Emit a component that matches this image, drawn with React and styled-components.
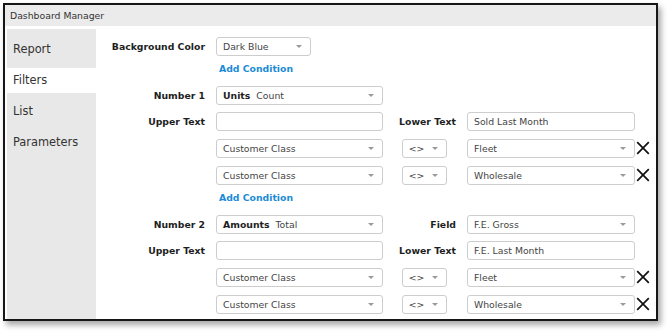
import React from 'react';
import styled, { createGlobalStyle } from 'styled-components';

const GlobalStyle = createGlobalStyle`
  html, body {
    margin: 0;
    padding: 0;
    background: #fff;
  }
  body {
    font-family: 'DejaVu Sans', Verdana, sans-serif;
  }
`;

const Page = styled.div`
  width: 670px;
  height: 335px;
  padding: 3px 0 0 3px;
  box-sizing: border-box;
`;

const Window = styled.div`
  width: 655px;
  height: 318px;
  box-sizing: border-box;
  border: 2px solid #161616;
  background: #fff;
  box-shadow: 3px 4px 6px rgba(0, 0, 0, 0.35);
  display: flex;
  flex-direction: column;
  overflow: hidden;
`;

const TitleBar = styled.div`
  height: 21px;
  line-height: 21px;
  padding-left: 5px;
  background: #ebebeb;
  color: #333;
  font-size: 9.3px;
`;

const Body = styled.div`
  flex: 1;
  display: flex;
  padding: 3px 0 0 2px;
  min-height: 0;
`;

const Sidebar = styled.div`
  width: 89px;
  background: #e8e8e8;
  padding-top: 8px;
  display: flex;
  flex-direction: column;
  gap: 6px;
`;

const NavItem = styled.div`
  height: 25px;
  line-height: 25px;
  padding-left: 6px;
  font-size: 11.4px;
  color: #333;
  background: ${props => props.$active ? '#fff' : 'transparent'};
`;

const Content = styled.div`
  flex: 1;
  padding-top: 7.7px;
  display: flex;
  flex-direction: column;
  gap: 7.67px;
`;

const Row = styled.div`
  display: grid;
  grid-template-columns: 120px 167px 84px 168px 16px;
  align-items: center;
  font-size: 9.3px;
`;

const Label = styled.div`
  grid-column: ${props => props.$col || 1};
  text-align: right;
  padding-right: 11px;
  font-weight: bold;
  color: #1e1e1e;
  white-space: nowrap;
`;

const Select = styled.div`
  grid-column: ${props => props.$col || 'auto'};
  width: ${props => props.$width ? props.$width + 'px' : 'auto'};
  margin-left: ${props => props.$offset || 0}px;
  height: 19px;
  box-sizing: border-box;
  border: 1px solid #cdcdcd;
  border-radius: 3px;
  background: #fff;
  padding: 0 8px 0 6px;
  display: flex;
  align-items: center;
  color: #444;
  white-space: nowrap;
`;

const Input = styled.div`
  grid-column: ${props => props.$col || 'auto'};
  height: 19px;
  box-sizing: border-box;
  border: 1px solid #cdcdcd;
  border-radius: 3px;
  background: #fff;
  padding: 0 6px;
  display: flex;
  align-items: center;
  color: #444;
`;

const Strong = styled.span`
  font-weight: bold;
  color: #1e1e1e;
  margin-right: 6px;
`;

const Caret = styled.span`
  margin-left: auto;
  width: 0;
  height: 0;
  border-left: 3px solid transparent;
  border-right: 3px solid transparent;
  border-top: 3.5px solid #9a9a9a;
`;

const AddLink = styled.div`
  grid-column: 2;
  height: 14.67px;
  line-height: 11px;
  padding-left: 3px;
  font-weight: bold;
  color: #1b8bd6;
  white-space: nowrap;
`;

const Remove = styled.svg`
  grid-column: 5;
  width: 14px;
  height: 14px;
  margin-left: 1px;
`;

const Dropdown = ({ children, ...rest }) => (
  <Select {...rest}>
    {children}
    <Caret />
  </Select>
);

const RemoveIcon = () => (
  <Remove viewBox="0 0 14 14">
    <path d="M1.2 1.2 L12.8 12.8 M12.8 1.2 L1.2 12.8" stroke="#111" strokeWidth="1.7" fill="none" />
  </Remove>
);

const ConditionRow = ({ value }) => (
  <Row>
    <Dropdown $col={2}>Customer Class</Dropdown>
    <Dropdown $col={3} $width={45} $offset={18.7}>&lt;&gt;</Dropdown>
    <Dropdown $col={4}>{value}</Dropdown>
    <RemoveIcon />
  </Row>
);

const navItems = ['Report', 'Filters', 'List', 'Parameters'];

const App = () => {
  return (
    <Page>
      <GlobalStyle />
      <Window>
        <TitleBar>Dashboard Manager</TitleBar>
        <Body>
          <Sidebar>
            {navItems.map(item => (
              <NavItem key={item} $active={item === 'Filters'}>{item}</NavItem>
            ))}
          </Sidebar>
          <Content>
            <Row>
              <Label>Background Color</Label>
              <Dropdown $col={2} $width={95}>Dark Blue</Dropdown>
            </Row>
            <Row>
              <AddLink>Add Condition</AddLink>
            </Row>
            <Row>
              <Label>Number 1</Label>
              <Dropdown $col={2}><Strong>Units</Strong>Count</Dropdown>
            </Row>
            <Row>
              <Label>Upper Text</Label>
              <Input $col={2} />
              <Label $col={3}>Lower Text</Label>
              <Input $col={4}>Sold Last Month</Input>
            </Row>
            <ConditionRow value="Fleet" />
            <ConditionRow value="Wholesale" />
            <Row>
              <AddLink>Add Condition</AddLink>
            </Row>
            <Row>
              <Label>Number 2</Label>
              <Dropdown $col={2}><Strong>Amounts</Strong>Total</Dropdown>
              <Label $col={3}>Field</Label>
              <Dropdown $col={4}>F.E. Gross</Dropdown>
            </Row>
            <Row>
              <Label>Upper Text</Label>
              <Input $col={2} />
              <Label $col={3}>Lower Text</Label>
              <Input $col={4}>F.E. Last Month</Input>
            </Row>
            <ConditionRow value="Fleet" />
            <ConditionRow value="Wholesale" />
          </Content>
        </Body>
      </Window>
    </Page>
  );
};

export default App;
